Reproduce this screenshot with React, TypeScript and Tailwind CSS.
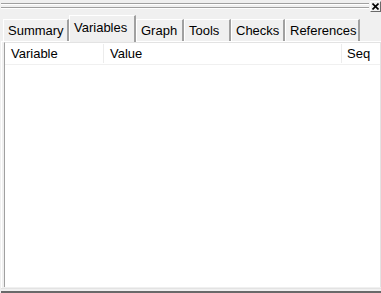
import React from 'react';

const tabs = [
  { label: 'Summary', w: 'w-[66px]' },
  { label: 'Variables', w: 'w-[67px]' },
  { label: 'Graph', w: 'w-[48px]' },
  { label: 'Tools', w: 'w-[47px]' },
  { label: 'Checks', w: 'w-[54px]' },
  { label: 'References', w: 'w-[75px]' },
];

function Tab({ label, w, active }: { label: string; w: string; active: boolean }) {
  if (active) {
    return (
      <div className={`relative z-10 -mb-px flex h-[27px] items-center border-l border-r-2 border-t border-l-white border-r-[#a0a0a0] border-t-white bg-[#f0f0f0] pb-[3px] pl-[4px] ${w}`}>
        {label}
      </div>
    );
  }
  return (
    <div className={`flex h-[22px] items-center border-l border-r-2 border-t border-l-white border-r-[#a0a0a0] border-t-white bg-[#f0f0f0] pl-[4px] ${w}`}>
      {label}
    </div>
  );
}

export default function App() {
  return (
    <div
      className="flex h-[293px] w-[381px] flex-col bg-[#f0f0f0] text-[13px] text-black"
      style={{ fontFamily: '"Liberation Sans", Arial, sans-serif' }}
    >
      <div className="flex h-[12px] items-center gap-[1px]">
        <div className="flex flex-1 flex-col gap-[2px] pl-[1px]">
          <div className="h-[2px] border-b border-t border-b-white border-t-[#a0a0a0]" />
          <div className="h-[2px] border-b border-t border-b-white border-t-[#a0a0a0]" />
        </div>
        <div className="flex h-[11px] w-[11px] items-center justify-center border border-b-[#696969] border-l-white border-r-[#696969] border-t-white">
          <svg width="7" height="7" viewBox="0 0 7 7">
            <path d="M0.5 0.5 L6.5 6.5 M6.5 0.5 L0.5 6.5" stroke="#000" strokeWidth="1.6" />
          </svg>
        </div>
      </div>
      <div className="flex flex-1 flex-col pl-[1px]">
        <div className="flex h-[29px] items-end pl-[2px]">
          {tabs.map((t) => (
            <Tab key={t.label} label={t.label} w={t.w} active={t.label === 'Variables'} />
          ))}
        </div>
        <div className="flex flex-1 border-l border-t border-l-white border-t-white pb-[1px] pl-[2px]">
          <div className="flex flex-1 flex-col border-l border-r border-t border-l-[#a0a0a0] border-r-[#e3e3e3] border-t-[#e3e3e3] bg-white">
            <div className="flex h-[22px] items-center border-b border-[#f0f0f0]">
              <div className="w-[99px] border-r border-[#ececec] pl-[6px]">Variable</div>
              <div className="flex-1 border-r border-[#ececec] pl-[6px]">Value</div>
              <div className="w-[38px] pl-[5px]">Seq</div>
            </div>
          </div>
        </div>
        <div className="h-[5px] border-b-2 border-t border-b-[#696969] border-t-[#e3e3e3] bg-[#f0f0f0]" />
      </div>
    </div>
  );
}
